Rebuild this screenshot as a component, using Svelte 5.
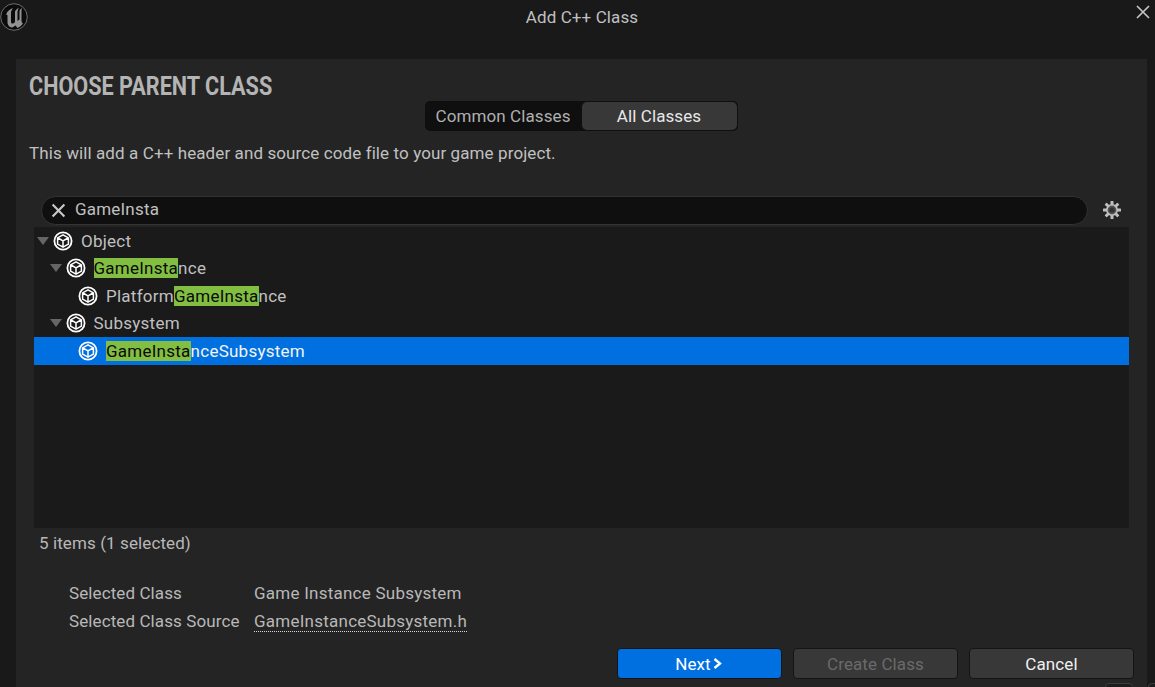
<script>
	const rows = [
		{ depth: 0, arrow: true, before: '', match: '', after: 'Object' },
		{ depth: 1, arrow: true, before: '', match: 'GameInsta', after: 'nce' },
		{ depth: 2, arrow: false, before: 'Platform', match: 'GameInsta', after: 'nce' },
		{ depth: 1, arrow: true, before: '', match: '', after: 'Subsystem' },
		{ depth: 2, arrow: false, before: '', match: 'GameInsta', after: 'nceSubsystem', selected: true },
	];
</script>

<div class="window">
	<header class="titlebar">
		<svg class="logo" width="29" height="29" viewBox="0 0 29 29">
			<circle cx="14" cy="14" r="13.300" fill="#0b0b0b" stroke="#6e6e6e" stroke-width="1" />
			<path transform="translate(0 -2)" d="M6 14C7 10 10 8 13 7C11.500 9 11 10.500 11 12L11 21C11 22.500 12.500 23 14 22L15 21L15 11C15 9.500 16.500 8 19 6.500C18 8 17.500 9.500 17.500 11L17.500 20L19.500 18.500L19.500 10.500C19.500 9 20.500 8 22 7C21.500 9 21.500 10 21.500 11L21.500 19.500C21.500 21 22 22 23 22.500C21.500 24.500 19.500 26 17.500 27L15.500 24.500L12.500 26.500C10 26.500 8 25 7.500 22L7.500 14.500C7.500 13.500 7 13.500 6 14Z" fill="#929292" />
		</svg>
		<span class="window-title">Add C++ Class</span>
		<svg class="close" width="14" height="14" viewBox="0 0 14 14">
			<path d="M1 1l12 12M13 1L1 13" stroke="#c4c4c4" stroke-width="1.700" fill="none" />
		</svg>
	</header>

	<main class="panel">
		<h1>CHOOSE PARENT CLASS</h1>
		<div class="tabs-row">
			<div class="tabs">
				<button class="tab">Common Classes</button>
				<button class="tab active">All Classes</button>
			</div>
		</div>
		<p class="desc">This will add a C++ header and source code file to your game project.</p>

		<div class="search-row">
			<div class="search">
				<svg width="15" height="15" viewBox="0 0 14 14">
					<path d="M1.500 1.500l11 11M12.500 1.500l-11 11" stroke="#c8c8c8" stroke-width="2" fill="none" />
				</svg>
				<span class="query">GameInsta</span>
			</div>
			<svg class="gear" width="20" height="20" viewBox="0 0 20 20">
				<g fill="#c0c0c0">
					<rect x="8.500" y="1" width="3" height="18" rx=".6" />
					<rect x="8.500" y="1" width="3" height="18" rx=".6" transform="rotate(45 10 10)" />
					<rect x="8.500" y="1" width="3" height="18" rx=".6" transform="rotate(90 10 10)" />
					<rect x="8.500" y="1" width="3" height="18" rx=".6" transform="rotate(135 10 10)" />
				</g>
				<circle cx="10" cy="10" r="5.200" fill="#555" stroke="#c0c0c0" stroke-width="1.600" />
				<circle cx="10" cy="10" r="2.800" fill="#333" />
			</svg>
		</div>

		<div class="tree">
			{#each rows as row}
				<div class="row" class:selected={row.selected} style="padding-left: {row.depth * 12.5 + 3}px">
					<span class="arrow" class:hidden={!row.arrow}></span>
					<svg class="cube" width="20" height="20" viewBox="0 0 20 20">
						<circle cx="10" cy="10" r="8.600" fill="none" stroke="#fff" stroke-width="1.800" />
						<path d="M10 3.800l5.400 3v6.400l-5.400 3-5.400-3V6.800z M5 7l5 2.900 5-2.900 M10 9.900v6" fill="none" stroke="#fff" stroke-width="1.500" stroke-linejoin="round" />
					</svg>
					<span class="label">{row.before}{#if row.match}<mark>{row.match}</mark>{/if}{row.after}</span>
				</div>
			{/each}
		</div>

		<div class="status">5 items (1 selected)</div>

		<div class="info">
			<span>Selected Class</span>
			<span class="value">Game Instance Subsystem</span>
			<span>Selected Class Source</span>
			<span class="value source-link">GameInstanceSubsystem.h</span>
		</div>

		<div class="actions">
			<button class="btn primary">Next<svg width="13" height="11" viewBox="0 0 13 11"><path d="M3.500 1L9 5.500 3.500 10" fill="none" stroke="#fff" stroke-width="2.400" /></svg></button>
			<button class="btn" disabled>Create Class</button>
			<button class="btn">Cancel</button>
		</div>

		<span class="peek first"></span>
	</main>
	<span class="peek second"></span>
</div>

<style>
	:global(body) {
		background: #191919;
	}

	.window {
		height: 687px;
		overflow: hidden;
		position: relative;
		display: flex;
		flex-direction: column;
		background: #191919;
		font-family: Roboto, "Liberation Sans", sans-serif;
		font-size: 17px;
		letter-spacing: 0.1px;
		color: #c0c0c0;
	}

	.titlebar {
		height: 59px;
		flex-shrink: 0;
		position: relative;
		display: flex;
		justify-content: center;
		padding: 8px 0 0 9px;
		box-sizing: border-box;
	}

	.logo {
		position: absolute;
		left: 0;
		top: 3px;
	}

	.close {
		position: absolute;
		right: 5px;
		top: 5px;
	}

	.window-title {
		line-height: 19px;
		color: #c0c0c0;
	}

	.panel {
		flex: 1;
		margin: 0 8px 0 16px;
		padding: 0 18px;
		background: #242424;
		position: relative;
		display: flex;
		flex-direction: column;
	}

	h1 {
		margin: 16px 0 0 -5px;
		font-size: 25px;
		line-height: 24px;
		font-weight: 700;
		letter-spacing: 0;
		color: #b4b4b4;
		transform: scaleX(0.865);
		transform-origin: left center;
		white-space: nowrap;
	}

	.tabs-row {
		display: flex;
		justify-content: center;
		margin: 2px 0 0 -1px;
	}

	.tabs {
		display: flex;
		width: 313px;
		height: 30px;
		background: #0f0f0f;
		border-radius: 5px;
		padding: 1px 1px 1px 0;
		box-sizing: border-box;
	}

	.tab {
		font: inherit;
		letter-spacing: inherit;
		border: 0;
		background: none;
		color: #b0b0b0;
		width: 157px;
		padding: 0;
		border-radius: 5px;
		white-space: nowrap;
	}

	.tab.active {
		width: 155px;
		background: #383838;
		color: #e8e8e8;
	}

	.desc {
		margin: 12px 0 0 -5px;
		line-height: 20px;
		color: #c0c0c0;
	}

	.search-row {
		display: flex;
		align-items: center;
		margin: 32px 0 0 7px;
		height: 30px;
	}

	.search {
		flex: 1;
		height: 29px;
		display: flex;
		align-items: center;
		gap: 9px;
		padding-left: 9px;
		box-sizing: border-box;
		background: #0f0f0f;
		border: 1px solid #333;
		border-radius: 15px;
		letter-spacing: 0.2px;
		color: #c0c0c0;
	}

	.query {
		padding-bottom: 2px;
	}

	.gear {
		margin: 0 7px 0 14px;
	}

	.tree {
		height: 301px;
		margin-top: 2px;
		background: #1a1a1a;
		letter-spacing: 0.25px;
	}

	.row {
		height: 27.5px;
		display: flex;
		align-items: center;
		box-sizing: border-box;
		color: #c0c0c0;
	}

	.row.selected {
		background: #0070e0;
		color: #f4f4f4;
	}

	.arrow {
		width: 0;
		height: 0;
		margin-right: 4px;
		border-left: 6.500px solid transparent;
		border-right: 6.500px solid transparent;
		border-top: 8px solid #666;
	}

	.arrow.hidden {
		visibility: hidden;
	}

	.label {
		margin-left: 8px;
		white-space: pre;
	}

	mark {
		display: inline-block;
		background: #82be41;
		color: #0a0a0a;
		line-height: 20px;
	}

	.status {
		margin: 5px 0 0 5px;
		line-height: 20px;
		color: #b8b8b8;
	}

	.info {
		display: grid;
		grid-template-columns: 185px auto;
		justify-content: start;
		row-gap: 8px;
		margin: 30px 0 0 35px;
		line-height: 20px;
		color: #b8b8b8;
	}

	.value {
		letter-spacing: 0.24px;
	}

	.source-link {
		justify-self: start;
		border-bottom: 1px dotted #d8d8d8;
	}

	.actions {
		display: flex;
		justify-content: flex-end;
		gap: 11px;
		margin: 16px -5px 0 0;
	}

	.btn {
		width: 165px;
		height: 31px;
		padding: 0;
		display: flex;
		align-items: center;
		justify-content: center;
		gap: 0;
		font: inherit;
		letter-spacing: inherit;
		color: #f0f0f0;
		background: #383838;
		border: 1px solid #141414;
		border-radius: 4px;
	}

	.btn.primary {
		background: #0070e0;
		color: #fff;
	}

	.btn:disabled {
		color: #6a6a6a;
	}

	.peek {
		position: absolute;
		height: 10px;
		border: 1px solid #3c3c3c;
		border-radius: 4px;
		background: #1d1d1d;
	}

	.peek.first {
		left: 1089px;
		width: 26px;
		top: 624px;
	}

	.peek.second {
		left: 1148px;
		width: 20px;
		top: 683px;
	}
</style>
